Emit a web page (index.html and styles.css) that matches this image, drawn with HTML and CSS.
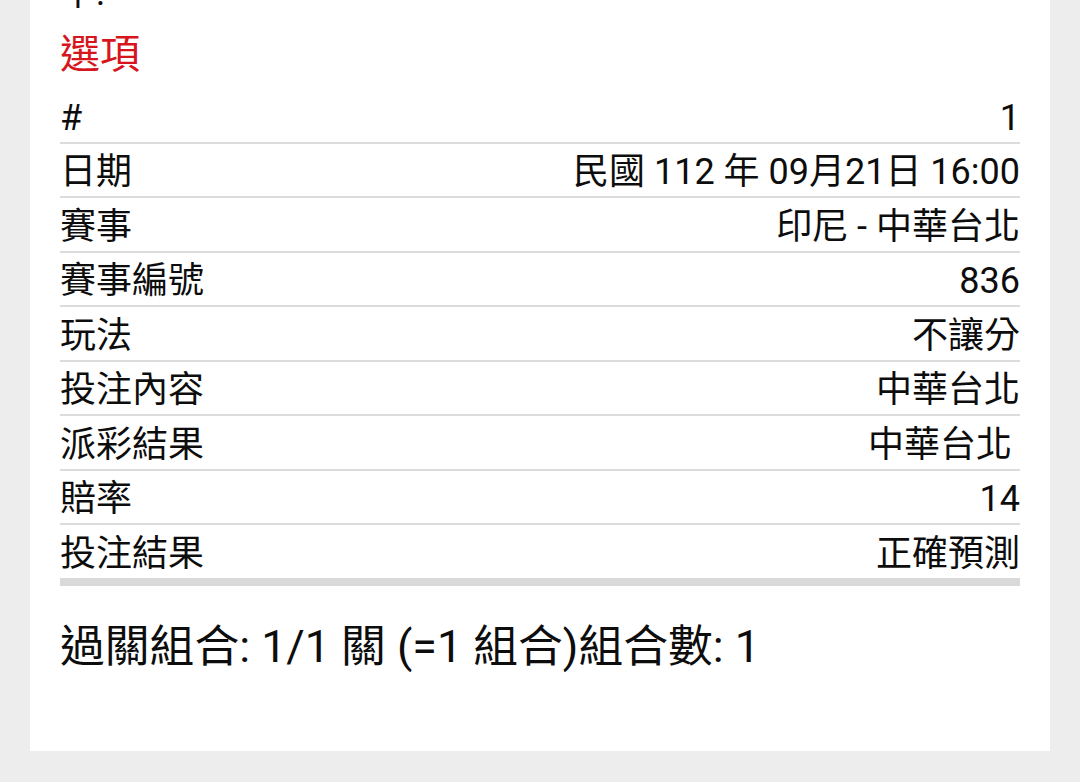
FILE: index.html
```html
<!DOCTYPE html>
<html lang="zh-Hant">
<head>
<meta charset="utf-8">
<title>選項</title>
<link rel="stylesheet" href="styles.css">
</head>
<body>
<div class="card">
  <div class="prev">中:</div>
  <h2 class="title">選項</h2>
  <div class="table">
    <div class="row"><span class="label">#</span><span class="value">1</span></div>
    <div class="row"><span class="label">日期</span><span class="value">民國 112 年 09月21日 16:00</span></div>
    <div class="row"><span class="label">賽事</span><span class="value">印尼 - 中華台北</span></div>
    <div class="row"><span class="label">賽事編號</span><span class="value">836</span></div>
    <div class="row"><span class="label">玩法</span><span class="value">不讓分</span></div>
    <div class="row"><span class="label">投注內容</span><span class="value">中華台北</span></div>
    <div class="row"><span class="label">派彩結果</span><span class="value value-pad">中華台北</span></div>
    <div class="row"><span class="label">賠率</span><span class="value">14</span></div>
    <div class="row row-last"><span class="label">投注結果</span><span class="value">正確預測</span></div>
  </div>
  <div class="summary">過關組合: 1/1 關 (=1 組合)組合數: 1</div>
</div>
</body>
</html>
```

FILE: styles.css
```css
html, body {
  margin: 0;
  padding: 0;
  background: #ededed;
}
body {
  font-family: Roboto, "Noto Sans CJK TC", "Noto Sans", sans-serif;
  color: #0d0d0d;
  overflow: hidden;
}
.card {
  margin: -27px 30px 0;
  padding: 0 30px;
  background: #fff;
  height: 778px;
  box-sizing: border-box;
}
.prev {
  font-size: 36px;
  height: 40px;
  line-height: 40px;
}
.title {
  margin: 22px 0 14px;
  font-size: 40px;
  line-height: 40px;
  font-weight: 400;
  color: #d6151d;
}
.table {
  display: flex;
  flex-direction: column;
}
.row {
  display: flex;
  justify-content: space-between;
  align-items: center;
  height: 47.5px;
  padding-top: 5px;
  border-bottom: 2px solid #dcdcdc;
  font-size: 36px;
  line-height: 36px;
}
.row-last {
  border-bottom: 8px solid #d9d9d9;
}
.value {
  text-align: right;
}
.value-pad {
  padding-right: 8px;
}
.summary {
  margin-top: 31px;
  font-size: 44.8px;
  line-height: 60px;
}
```
